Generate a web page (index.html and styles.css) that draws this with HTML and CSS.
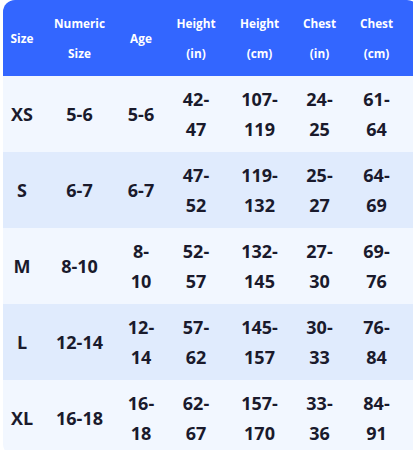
FILE: index.html
```html
<!DOCTYPE html>
<html>
<head>
<meta charset="utf-8">
<link rel="stylesheet" href="styles.css">
</head>
<body>
<div class="wrap">
<table class="size-table">
  <colgroup>
    <col class="c1"><col class="c2"><col class="c3"><col class="c4"><col class="c5"><col class="c6"><col class="c7">
  </colgroup>
  <thead>
    <tr>
      <th>Size</th>
      <th>Numeric<br>Size</th>
      <th>Age</th>
      <th>Height<br>(in)</th>
      <th>Height<br>(cm)</th>
      <th>Chest<br>(in)</th>
      <th class="last">Chest<br>(cm)</th>
    </tr>
  </thead>
  <tbody>
    <tr>
      <td>XS</td><td>5-6</td><td>5-6</td><td>42-<br>47</td><td>107-<br>119</td><td>24-<br>25</td><td class="last">61-<br>64</td>
    </tr>
    <tr>
      <td>S</td><td>6-7</td><td>6-7</td><td>47-<br>52</td><td>119-<br>132</td><td>25-<br>27</td><td class="last">64-<br>69</td>
    </tr>
    <tr>
      <td>M</td><td>8-10</td><td>8-<br>10</td><td>52-<br>57</td><td>132-<br>145</td><td>27-<br>30</td><td class="last">69-<br>76</td>
    </tr>
    <tr>
      <td>L</td><td>12-14</td><td>12-<br>14</td><td>57-<br>62</td><td>145-<br>157</td><td>30-<br>33</td><td class="last">76-<br>84</td>
    </tr>
    <tr>
      <td>XL</td><td>16-18</td><td>16-<br>18</td><td>62-<br>67</td><td>157-<br>170</td><td>33-<br>36</td><td class="last">84-<br>91</td>
    </tr>
  </tbody>
</table>
</div>
</body>
</html>
```
FILE: styles.css
```css
html, body {
  margin: 0;
  padding: 0;
  background: #ffffff;
  overflow: hidden;
  height: 450px;
}
.wrap {
  padding-left: 3px;
  width: 430px;
}
.size-table {
  border-collapse: separate;
  border-spacing: 0;
  table-layout: fixed;
  width: 416px;
  border-radius: 12px;
  overflow: hidden;
  font-family: "Open Sans", "Noto Sans", sans-serif;
  font-weight: 700;
  color: #1a1a2c;
}
.c1 { width: 38px; }
.c2 { width: 77px; }
.c3 { width: 46px; }
.c4 { width: 64px; }
.c5 { width: 63px; }
.c6 { width: 57px; }
.c7 { width: 71px; }
th, td {
  padding: 8px 0;
  text-align: center;
  vertical-align: middle;
  line-height: 30px;
}
th {
  background: #3366ff;
  color: #ffffff;
  font-size: 11.8px;
  height: 60px;
}
td {
  font-size: 18px;
  height: 60px;
}
th.last, td.last {
  padding-right: 14px;
}
tbody tr:nth-child(odd) td { background: #f2f7ff; }
tbody tr:nth-child(even) td { background: #e0ebfd; }
```
